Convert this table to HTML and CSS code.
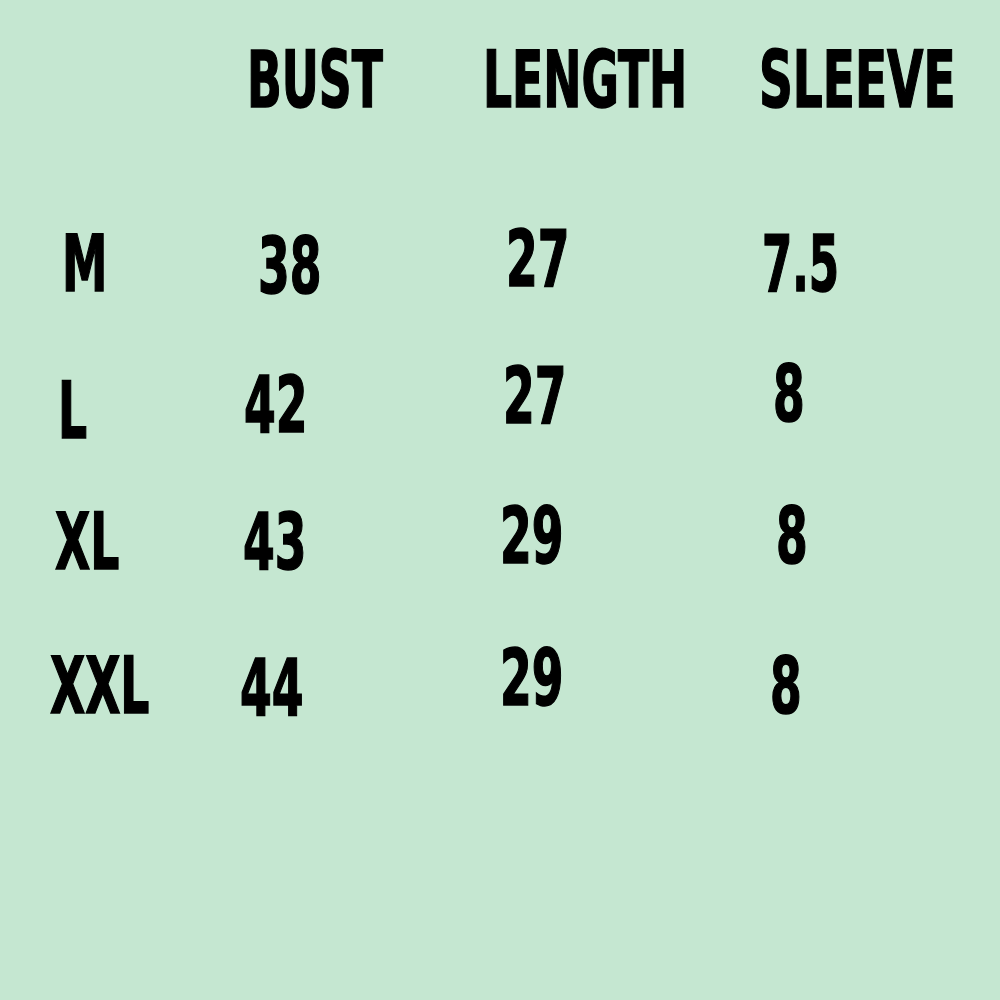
FILE: index.html
```html
<!DOCTYPE html>
<html>
<head>
<meta charset="utf-8">
<link rel="stylesheet" href="styles.css">
</head>
<body>
<main class="chart">
  <div class="corner"></div>
  <div class="cell h-bust">BUST</div>
  <div class="cell h-length">LENGTH</div>
  <div class="cell h-sleeve">SLEEVE</div>

  <div class="cell m-size">M</div>
  <div class="cell m-bust">38</div>
  <div class="cell m-length">27</div>
  <div class="cell m-sleeve">7.5</div>

  <div class="cell l-size">L</div>
  <div class="cell l-bust">42</div>
  <div class="cell l-length">27</div>
  <div class="cell l-sleeve">8</div>

  <div class="cell xl-size">XL</div>
  <div class="cell xl-bust">43</div>
  <div class="cell xl-length">29</div>
  <div class="cell xl-sleeve">8</div>

  <div class="cell xxl-size">XXL</div>
  <div class="cell xxl-bust">44</div>
  <div class="cell xxl-length">29</div>
  <div class="cell xxl-sleeve">8</div>
</main>
</body>
</html>
```
FILE: styles.css
```css
html, body {
  margin: 0;
  padding: 0;
  background: #c5e7d1;
}
body {
  width: 1000px;
  height: 1000px;
  overflow: hidden;
}
.chart {
  box-sizing: border-box;
  height: 1000px;
  display: grid;
  grid-template-columns: 190px 260px 260px 240px;
  grid-template-rows: 180px 136px 140px 142px 1fr;
  padding: 41px 0 0 50px;
}
.cell {
  justify-self: start;
  align-self: start;
  font-family: "DejaVu Sans Condensed", "DejaVu Sans", sans-serif;
  font-stretch: condensed;
  font-weight: bold;
  font-size: 78px;
  line-height: 1;
  color: #000;
  white-space: nowrap;
  -webkit-text-stroke: 1.5px #000;
  transform-origin: 0 0;
  transform: scaleX(0.65);
}

.h-bust { margin-left: 7px; }
.h-length { margin-left: -17px; }
.h-sleeve { margin-left: -1px; transform: scaleX(0.67); }

.m-size { margin: 4px 0 0 12px; }
.m-bust { margin: 6px 0 0 18px; }
.m-length { margin: -1px 0 0 6px; }
.m-sleeve { margin: 4px 0 0 2px; transform: scaleX(0.62); }

.l-size { margin: 15px 0 0 8px; }
.l-bust { margin: 9px 0 0 4px; }
.l-length { margin: 0 0 0 3px; }
.l-sleeve { margin: -2px 0 0 13px; }

.xl-size { margin: 6px 0 0 5px; }
.xl-bust { margin: 6px 0 0 3px; }
.xl-length { margin: 0; }
.xl-sleeve { margin: 0 0 0 16px; }

.xxl-size { margin: 8px 0 0 0; }
.xxl-bust { margin: 10px 0 0 0; }
.xxl-length { margin: 0; }
.xxl-sleeve { margin: 8px 0 0 10px; }
```
